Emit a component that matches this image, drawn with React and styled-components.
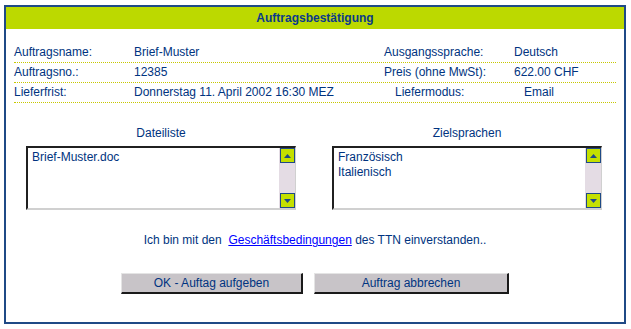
import React from 'react'
import styled, { createGlobalStyle } from 'styled-components'

const GlobalStyle = createGlobalStyle`
  html, body {
    margin: 0;
    padding: 0;
    background: #ffffff;
  }
  body {
    font-family: "Liberation Sans", Arial, sans-serif;
    font-size: 12px;
    color: #003380;
  }
`

const Page = styled.div`
  padding: 5px 0 0 4px;
`

const Frame = styled.div`
  box-sizing: border-box;
  width: 622px;
  height: 319px;
  border: 2px solid #1f4a86;
  display: flex;
  flex-direction: column;
`

const Header = styled.div`
  height: 22px;
  line-height: 22px;
  background: #bcd900;
  text-align: center;
  font-weight: bold;
  color: #0a3a8a;
`

const InfoTable = styled.div`
  margin: 14px 8px 0;
`

const InfoRow = styled.div`
  display: grid;
  grid-template-columns: 120px 250px 130px 1fr;
  height: 19px;
  line-height: 19px;
  border-bottom: 1px dotted #c8c800;
`

const Cell = styled.div`
  white-space: nowrap;
  padding-left: ${p => p.$shift || 0}px;
`

const Lists = styled.div`
  margin-top: 23px;
  display: grid;
  grid-template-columns: 1fr 1fr;
`

const ListColumn = styled.div`
  display: flex;
  flex-direction: column;
  align-items: center;
  padding-left: ${p => p.$left || 0}px;
  padding-right: ${p => p.$right || 0}px;
`

const ListTitle = styled.div`
  line-height: 15px;
  margin-bottom: 5px;
`

const ListBox = styled.div`
  box-sizing: border-box;
  width: 270px;
  height: 64px;
  border-style: solid;
  border-width: 2px 1px 2px 2px;
  border-color: #202020 #d0d0d0 #d0d0d0 #202020;
  display: flex;
  background: #ffffff;
`

const ListItems = styled.div`
  flex: 1;
  padding: 2px 4px;
  line-height: 15px;
`

const ScrollBar = styled.div`
  width: 16px;
  background: #e4dce4;
  display: flex;
  flex-direction: column;
  justify-content: space-between;
  align-items: center;
`

const ScrollButton = styled.div`
  box-sizing: border-box;
  width: 15px;
  height: 15px;
  background: #c4e000;
  border: 1px solid #1f4a86;
  display: flex;
  align-items: center;
  justify-content: center;
`

const Agreement = styled.div`
  margin-top: 23px;
  text-align: center;
  line-height: 15px;
`

const Link = styled.a`
  color: #0000ff;
  text-decoration: underline;
`

const Buttons = styled.div`
  margin-top: 25px;
  display: flex;
  justify-content: center;
  gap: 11px;
`

const Button = styled.button`
  box-sizing: border-box;
  width: ${p => p.$width}px;
  height: 21px;
  padding: 0;
  font-family: "Liberation Sans", Arial, sans-serif;
  font-size: 12px;
  color: #003380;
  background: #c8c4c8;
  border-style: solid;
  border-width: 1px 2px 2px 1px;
  border-color: #e4e4e4 #1a1a1a #1a1a1a #e4e4e4;
`

const Arrow = ({ down }) => (
  <svg width="7" height="4" viewBox="0 0 7 4">
    <polygon points={down ? '0,0 7,0 3.5,4' : '0,4 7,4 3.5,0'} fill="#1f4a86" />
  </svg>
)

const List = ({ title, items, left, right }) => (
  <ListColumn $left={left} $right={right}>
    <ListTitle>{title}</ListTitle>
    <ListBox>
      <ListItems>
        {items.map(item => <div key={item}>{item}</div>)}
      </ListItems>
      <ScrollBar>
        <ScrollButton><Arrow /></ScrollButton>
        <ScrollButton><Arrow down /></ScrollButton>
      </ScrollBar>
    </ListBox>
  </ListColumn>
)

const rows = [
  ['Auftragsname:', 'Brief-Muster', 'Ausgangssprache:', 'Deutsch', 0],
  ['Auftragsno.:', '12385', 'Preis (ohne MwSt):', '622.00 CHF', 0],
  ['Lieferfrist:', 'Donnerstag 11. April 2002 16:30 MEZ', 'Liefermodus:', 'Email', 11]
]

export default function App () {
  return <Page>
    <GlobalStyle />
    <Frame>
      <Header>Auftragsbestätigung</Header>

      <InfoTable>
        {rows.map(([l1, v1, l2, v2, shift]) =>
          <InfoRow key={l1}>
            <Cell>{l1}</Cell>
            <Cell>{v1}</Cell>
            <Cell $shift={shift}>{l2}</Cell>
            <Cell $shift={shift ? shift - 1 : 0}>{v2}</Cell>
          </InfoRow>
        )}
      </InfoTable>

      <Lists>
        <List title="Dateiliste" items={['Brief-Muster.doc']} left={1} />
        <List title="Zielsprachen" items={['Französisch', 'Italienisch']} right={5} />
      </Lists>

      <Agreement>
        Ich bin mit den&nbsp; <Link href="#">Geschäftsbedingungen</Link> des TTN einverstanden..
      </Agreement>

      <Buttons>
        <Button $width={182}>OK - Auftag aufgeben</Button>
        <Button $width={195}>Auftrag abbrechen</Button>
      </Buttons>
    </Frame>
  </Page>
}
